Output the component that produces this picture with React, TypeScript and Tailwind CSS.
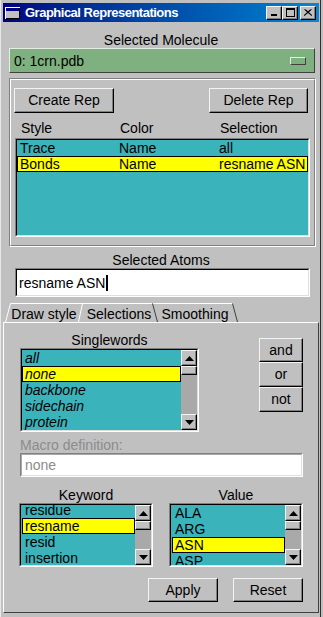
import React from 'react'

const raised =
  'border border-t-[#f4f4f4] border-l-[#f4f4f4] border-b-black border-r-black shadow-[inset_-1px_-1px_0_#808080]'

function Button({ className, children }: { className: string; children: React.ReactNode }) {
  return (
    <div className={`${raised} flex items-center justify-center text-[14px] text-black shrink-0 ${className}`}>
      {children}
    </div>
  )
}

function Sunken({ className, inner, children }: { className: string; inner?: string; children?: React.ReactNode }) {
  return (
    <div className={`border border-t-[#808080] border-l-[#808080] border-b-white border-r-white shrink-0 ${className}`}>
      <div
        className={`h-full w-full border border-t-black border-l-black border-b-[#dfdfdf] border-r-[#dfdfdf] overflow-hidden ${inner ?? ''}`}
      >
        {children}
      </div>
    </div>
  )
}

function ArrowBtn({ down }: { down?: boolean }) {
  return (
    <div className={`${raised} bg-[#c0c0c0] w-[16px] h-[16px] shrink-0 flex items-center justify-center`}>
      <svg width="9" height="5" viewBox="0 0 9 5">
        <path d={down ? 'M0 0H9L4.5 5Z' : 'M0 5H9L4.5 0Z'} fill="black" />
      </svg>
    </div>
  )
}

function ScrollBar() {
  return (
    <div className="w-[16px] h-full shrink-0 flex flex-col bg-[#a9a9a9]">
      <ArrowBtn />
      <div className={`${raised} h-[9px] shrink-0 bg-[#c0c0c0]`} />
      <div className="flex-1" />
      <ArrowBtn down />
    </div>
  )
}

function Row({ text, sel, italic }: { text: string; sel?: boolean; italic?: boolean }) {
  return (
    <div
      className={`h-[16px] shrink-0 flex items-center leading-none text-[14px] text-black ${
        sel ? 'bg-[#ffff00] border border-black pl-[2px]' : 'pl-[3px]'
      } ${italic ? 'italic' : ''}`}
    >
      {text}
    </div>
  )
}

function TitleBtn({ children }: { children: React.ReactNode }) {
  return (
    <div
      className={`${raised} bg-[#c0c0c0] w-[16px] h-[14px] flex items-center justify-center`}
    >
      {children}
    </div>
  )
}

export default function App() {
  return (
    <div className="w-[323px] h-[617px] bg-[#c0c0c0] font-['Liberation_Sans',Arial,sans-serif] text-black">
      <div className="w-[321px] h-full border-l border-l-[#e8e8e8] border-r border-r-[#303030] pl-[2px] pr-[1px] pt-[3px] pb-[4px] flex flex-col">
        {/* Title bar */}
        <div className="h-[19px] shrink-0 bg-gradient-to-r from-[#000080] to-[#1084d0] flex items-center pl-[2px] pr-[3px]">
          <svg width="15" height="12" viewBox="0 0 15 12" className="shrink-0">
            <rect x="0" y="0" width="15" height="12" fill="white" />
            <rect x="1" y="1" width="14" height="11" fill="black" />
            <rect x="1" y="1" width="13" height="10" fill="#c0c0c0" />
            <rect x="1" y="1" width="13" height="3" fill="#000080" />
          </svg>
          <span className="ml-[5px] text-[13px] font-bold text-white tracking-[-0.5px] leading-none">
            Graphical Representations
          </span>
          <div className="flex-1" />
          <TitleBtn>
            <svg width="8" height="8" viewBox="0 0 8 8">
              <rect x="1" y="5" width="6" height="2" fill="black" />
            </svg>
          </TitleBtn>
          <TitleBtn>
            <svg width="9" height="9" viewBox="0 0 9 9">
              <rect x="0.5" y="0.5" width="8" height="8" fill="none" stroke="black" />
              <rect x="0" y="1" width="9" height="1" fill="black" />
            </svg>
          </TitleBtn>
          <div className="w-[2px]" />
          <TitleBtn>
            <svg width="8" height="7" viewBox="0 0 8 7">
              <path d="M0.5 0.5L7.5 6.5M1.5 0.5L8 6.5M7.5 0.5L0.5 6.5M6.5 0.5L0 6.5" stroke="black" strokeWidth="1" />
            </svg>
          </TitleBtn>
        </div>

        {/* Selected Molecule */}
        <div className="mt-[10px] h-[16px] flex items-center justify-center text-[14px] leading-none">Selected Molecule</div>
        <div className="ml-[6px] w-[306px] h-[25px] shrink-0 bg-[#7fb07f] border border-t-[#e4eee4] border-l-[#e4eee4] border-b-[#404040] border-r-[#404040] flex items-center justify-between pl-[4px] pr-[8px]">
          <span className="text-[14px] leading-none">0: 1crn.pdb</span>
          <div className="w-[16px] h-[8px] bg-[#7fb07f] border border-t-[#e4eee4] border-l-[#e4eee4] border-b-[#404040] border-r-[#404040]" />
        </div>

        {/* Reps group */}
        <div className="ml-[6px] mt-[5px] w-[307px] h-[169px] shrink-0 border border-t-[#808080] border-l-[#808080] border-b-white border-r-white">
          <div className="h-full border border-t-white border-l-white border-b-[#808080] border-r-[#808080] flex flex-col">
            <div className="mt-[8px] flex justify-between pl-[3px] pr-[6px]">
              <Button className="w-[100px] h-[25px]">Create Rep</Button>
              <Button className="w-[99px] h-[25px]">Delete Rep</Button>
            </div>
            <div className="mt-[7px] ml-[10px] h-[16px] grid grid-cols-[99px_100px_1fr] items-center text-[14px] leading-none">
              <span>Style</span>
              <span>Color</span>
              <span>Selection</span>
            </div>
            <Sunken className="mt-[2px] ml-[4px] w-[295px] h-[99px]" inner="bg-[#3bb3bb]">
              <div className="h-[16px] grid grid-cols-[99px_100px_1fr] items-center pl-[3px] text-[14px] leading-none">
                <span>Trace</span>
                <span>Name</span>
                <span>all</span>
              </div>
              <div className="h-[16px] grid grid-cols-[99px_100px_1fr] items-center pl-[2px] bg-[#ffff00] border border-black text-[14px] leading-none">
                <span>Bonds</span>
                <span>Name</span>
                <span>resname ASN</span>
              </div>
            </Sunken>
          </div>
        </div>

        {/* Selected Atoms */}
        <div className="mt-[5px] h-[16px] flex items-center justify-center text-[14px] leading-none">Selected Atoms</div>
        <Sunken className="ml-[12px] w-[295px] h-[29px]" inner="bg-white flex items-center pl-[2px]">
          <span className="text-[14px] leading-none">resname ASN</span>
          <span className="ml-[1px] w-[2px] h-[16px] bg-black" />
        </Sunken>

        {/* Tabs */}
        <div className="relative mt-[5px] h-[20px] shrink-0 flex pl-[2px] pt-[3px] text-[14px] leading-none">
          <svg className="absolute inset-0" width="316" height="20" viewBox="0 0 316 20">
            <path d="M2.5 20L7.5 1.5L79.5 1.5" fill="none" stroke="white" />
            <path d="M150 1.5L229.5 1.5" fill="none" stroke="white" />
            <path d="M229.5 1.5L234.5 20" fill="none" stroke="#404040" />
            <path d="M75.5 20L79.5 1.5L149.5 1.5" fill="none" stroke="white" />
            <path d="M149.5 1.5L154.5 20" fill="none" stroke="#404040" />
          </svg>
          <div className="relative w-[78px] flex items-center justify-center">Draw style</div>
          <div className="relative w-[72px] flex items-center justify-center">Selections</div>
          <div className="relative w-[80px] flex items-center justify-center">Smoothing</div>
        </div>

        {/* Tab panel */}
        <div className="flex-1 border border-t-white border-l-white border-b-[#404040] border-r-[#404040] flex flex-col pt-[9px]">
          <div className="flex items-start">
            <div className="ml-[16px] flex flex-col">
              <div className="h-[16px] flex items-center justify-center text-[14px] leading-none">Singlewords</div>
              <Sunken className="w-[179px] h-[84px]" inner="bg-[#3bb3bb] flex">
                <div className="flex-1 flex flex-col">
                  <Row text="all" italic />
                  <Row text="none" italic sel />
                  <Row text="backbone" italic />
                  <Row text="sidechain" italic />
                  <Row text="protein" italic />
                </div>
                <ScrollBar />
              </Sunken>
            </div>
            <div className="ml-[60px] mt-[6px] flex flex-col">
              <Button className="w-[44px] h-[24px]">and</Button>
              <Button className="w-[44px] h-[25px]">or</Button>
              <Button className="w-[44px] h-[25px]">not</Button>
            </div>
          </div>

          <div className="mt-[5px] ml-[16px] h-[16px] flex items-center text-[14px] leading-none text-[#8c8c8c]">
            Macro definition:
          </div>
          <div className="ml-[16px] w-[283px] h-[24px] shrink-0 border border-t-[#808080] border-l-[#808080] border-b-white border-r-white">
            <div className="h-full border border-t-[#a8a8a8] border-l-[#a8a8a8] border-b-[#dfdfdf] border-r-[#dfdfdf] bg-white flex items-center pl-[3px] text-[14px] leading-none text-[#8c8c8c]">
              none
            </div>
          </div>

          <div className="mt-[10px] flex">
            <div className="ml-[15px] flex flex-col">
              <div className="h-[16px] flex items-center justify-center text-[14px] leading-none">Keyword</div>
              <Sunken className="w-[134px] h-[64px]" inner="bg-[#3bb3bb] flex">
                <div className="flex-1 flex flex-col pl-[1px] mt-[-3px]">
                  <Row text="residue" />
                  <Row text="resname" sel />
                  <Row text="resid" />
                  <Row text="insertion" />
                </div>
                <ScrollBar />
              </Sunken>
            </div>
            <div className="ml-[16px] flex flex-col">
              <div className="h-[16px] flex items-center justify-center text-[14px] leading-none">Value</div>
              <Sunken className="w-[134px] h-[64px]" inner="bg-[#3bb3bb] flex">
                <div className="flex-1 flex flex-col pl-[1px]">
                  <Row text="ALA" />
                  <Row text="ARG" />
                  <Row text="ASN" sel />
                  <Row text="ASP" />
                </div>
                <ScrollBar />
              </Sunken>
            </div>
          </div>

          <div className="mt-[11px] flex justify-end gap-[15px] pr-[15px]">
            <Button className="w-[70px] h-[24px]">Apply</Button>
            <Button className="w-[70px] h-[24px]">Reset</Button>
          </div>
        </div>
      </div>
    </div>
  )
}
